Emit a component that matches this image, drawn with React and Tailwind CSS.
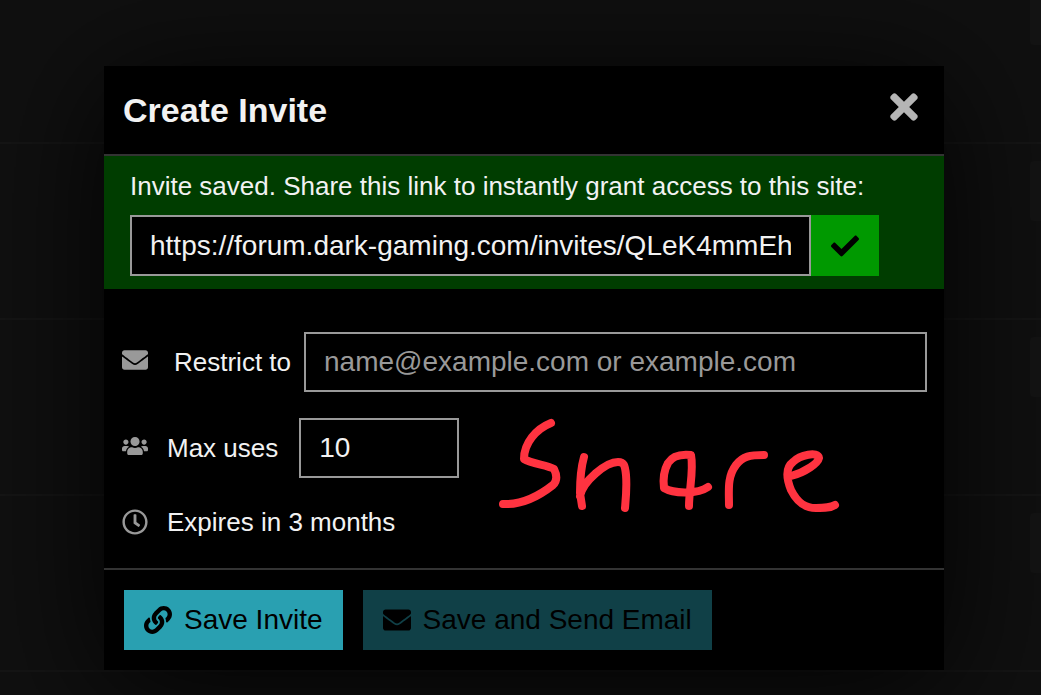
import { useState } from "react";
import {
  FaCheck,
  FaEnvelope,
  FaLink,
  FaRegClock,
  FaTimes,
  FaUsers,
} from "react-icons/fa";

// Dimmed topic rows behind the modal
const TopicList = () => (
  <div className="h-full overflow-hidden bg-[#101010]" aria-hidden="true">
    <div className="-mt-8">
      {[1, 2, 3, 4].map((row) => (
        <div
          key={row}
          className="flex h-[176px] items-start justify-end border-b-2 border-[#151515] pt-[17px]"
        >
          <div className="h-[60px] w-[11px] rounded-l-sm bg-[#141414]" />
        </div>
      ))}
    </div>
  </div>
);

const ShareScribble = () => (
  <svg
    className="h-[110px] w-[350px]"
    viewBox="495 410 350 110"
    fill="none"
    stroke="#ff3340"
    strokeWidth="8"
    strokeLinecap="round"
    strokeLinejoin="round"
  >
    <path d="M551 423C536 429 524 443 524 459C532 464 547 465 554 469C557 475 557 481 553 485C539 496 521 505 503 504" />
    <path d="M584 457C580 471 580 483 580 493L582 506M580 496C583 481 606 462 618 462C624 462 625 465 626 475C627 488 626 497 625 508" />
    <path d="M689 506C689 490 694 470 691 455C682 454 673 455 668 463C663 472 663 480 664 488C674 494 698 494 708 487" />
    <path d="M729 505C729 490 727 477 736 465C743 456 750 455 764 455" />
    <path d="M791 476C806 472 818 463 819 458C818 451 800 455 793 462C785 468 787 480 791 490C798 504 806 508 816 508C825 508 830 508 835 505" />
  </svg>
);

export default function App() {
  const [email, setEmail] = useState("");
  const [maxUses, setMaxUses] = useState("10");

  return (
    <div className="relative h-screen overflow-hidden font-['Liberation_Sans',Arial,sans-serif] text-[26px] leading-8 text-[#f2f2f2]">
      <TopicList />

      <div className="absolute inset-0 pt-[66px] pr-[97px] pl-[104px]">
        <section
          role="dialog"
          aria-labelledby="invite-title"
          className="bg-black shadow-[0_16px_120px_rgba(0,0,0,0.9)]"
        >
          <header className="flex items-center justify-between border-b-2 border-[#333] py-6 pr-5 pl-[19px]">
            <h1 id="invite-title" className="text-[34px] leading-10 font-bold">
              Create Invite
            </h1>
            <button type="button" aria-label="Close" className="-mt-1.5 text-[40px] text-[#b5b5b5]">
              <FaTimes />
            </button>
          </header>

          <div className="bg-[#003d00] px-[26px] pt-[14px] pb-[13px]">
            <label htmlFor="invite-link" className="block">
              Invite saved. Share this link to instantly grant access to this site:
            </label>
            <div className="mt-[13px] flex h-[61px] max-w-[749px]">
              <input
                id="invite-link"
                readOnly
                value="https://forum.dark-gaming.com/invites/QLeK4mmEh"
                className="min-w-0 flex-1 border-2 border-[#999] bg-black px-[18px] text-[28px]"
              />
              <button
                type="button"
                aria-label="Copied"
                className="flex w-[68px] items-center justify-center bg-[#009900] text-[28px] text-black"
              >
                <FaCheck />
              </button>
            </div>
          </div>

          <div className="pt-[43px] pr-[17px] pb-[30px] pl-[18px]">
            <div className="flex items-center">
              <FaEnvelope className="mb-1 text-[#999]" />
              <label htmlFor="invite-email" className="ml-[26px]">
                Restrict to
              </label>
              <input
                id="invite-email"
                placeholder="name@example.com or example.com"
                value={email}
                onChange={(e) => setEmail(e.target.value)}
                className="ml-[13px] h-[60px] min-w-0 flex-1 border-2 border-[#999] bg-black px-[18px] text-[28px] placeholder:text-[#999]"
              />
            </div>

            <div className="relative mt-[26px] flex items-center">
              <FaUsers className="mb-1 text-[#999]" />
              <label htmlFor="invite-uses" className="ml-[19px]">
                Max uses
              </label>
              <input
                id="invite-uses"
                value={maxUses}
                onChange={(e) => setMaxUses(e.target.value)}
                className="ml-[21px] h-[60px] w-40 border-2 border-[#999] bg-black px-[18px] text-[28px]"
              />
              <div className="absolute -top-2 left-[373px]">
                <ShareScribble />
              </div>
            </div>

            <div className="mt-7 flex items-center">
              <FaRegClock className="text-[#999]" />
              <span className="ml-[19px]">Expires in 3 months</span>
            </div>
          </div>

          <footer className="flex gap-5 border-t-2 border-[#333] p-5 text-[28px] text-black">
            <button type="button" className="flex h-[60px] items-center gap-3 bg-[#29a0b1] px-5">
              <FaLink />
              Save Invite
            </button>
            <button
              type="button"
              disabled
              className="flex h-[60px] items-center gap-3 bg-[#104047] px-5"
            >
              <FaEnvelope />
              Save and Send Email
            </button>
          </footer>
        </section>
      </div>
    </div>
  );
}
